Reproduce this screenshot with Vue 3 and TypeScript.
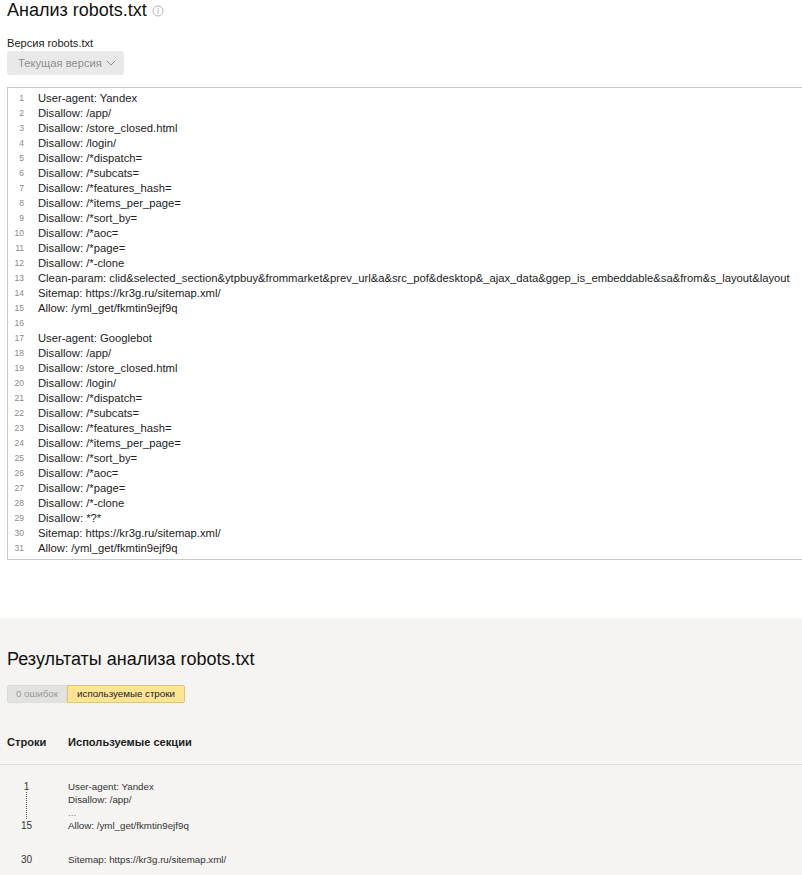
<script setup lang="ts">
const yandex: string[] = [
  'User-agent: Yandex', 'Disallow: /app/', 'Disallow: /store_closed.html', 'Disallow: /login/',
  'Disallow: /*dispatch=', 'Disallow: /*subcats=', 'Disallow: /*features_hash=', 'Disallow: /*items_per_page=',
  'Disallow: /*sort_by=', 'Disallow: /*aoc=', 'Disallow: /*page=', 'Disallow: /*-clone',
  'Clean-param: clid&selected_section&ytpbuy&frommarket&prev_url&a&src_pof&desktop&_ajax_data&ggep_is_embeddable&sa&from&s_layout&layout',
  'Sitemap: https://kr3g.ru/sitemap.xml/', 'Allow: /yml_get/fkmtin9ejf9q', '',
  'User-agent: Googlebot', 'Disallow: /app/', 'Disallow: /store_closed.html', 'Disallow: /login/',
  'Disallow: /*dispatch=', 'Disallow: /*subcats=', 'Disallow: /*features_hash=', 'Disallow: /*items_per_page=',
  'Disallow: /*sort_by=', 'Disallow: /*aoc=', 'Disallow: /*page=', 'Disallow: /*-clone', 'Disallow: *?*',
  'Sitemap: https://kr3g.ru/sitemap.xml/', 'Allow: /yml_get/fkmtin9ejf9q',
]
</script>

<template>
  <div class="page">
    <section class="top">
      <h1 class="title">
        <span>Анализ robots.txt</span>
        <svg class="info" width="12" height="12" viewBox="0 0 12 12" fill="none">
          <circle cx="6" cy="6" r="5" stroke="#b5b5b5" />
          <path d="M6 5.2V9M6 3v1.2" stroke="#b5b5b5" />
        </svg>
      </h1>
      <div class="label">Версия robots.txt</div>
      <div class="select">
        Текущая версия
        <svg width="10" height="6" viewBox="0 0 10 6" fill="none">
          <path d="M.7.7 5 5l4.3-4.3" stroke="#8c8c8c" />
        </svg>
      </div>
      <div class="editor">
        <div v-for="(line, i) in yandex" :key="i" class="line">
          <span class="num">{{ i + 1 }}</span>
          <span class="code">{{ line }}</span>
        </div>
      </div>
    </section>
    <section class="results">
      <h2 class="subtitle">Результаты анализа robots.txt</h2>
      <div class="tabs">
        <span class="tab off">0 ошибок</span>
        <span class="tab on">используемые строки</span>
      </div>
      <div class="head">
        <span class="c1">Строки</span>
        <span>Используемые секции</span>
      </div>
      <div class="rows">
        <div class="row">
          <div class="c1 nums">
            <span>1</span>
            <i class="dots"></i>
            <span>15</span>
          </div>
          <div class="text">
            <div>User-agent: Yandex</div>
            <div>Disallow: /app/</div>
            <div class="more">...</div>
            <div>Allow: /yml_get/fkmtin9ejf9q</div>
          </div>
        </div>
        <div class="row second">
          <div class="c1 nums"><span>30</span></div>
          <div class="text"><div>Sitemap: https://kr3g.ru/sitemap.xml/</div></div>
        </div>
      </div>
    </section>
  </div>
</template>

<style>
html, body { margin: 0; background: #fff; }
</style>

<style scoped>
.page {
  width: 802px;
  height: 875px;
  overflow: hidden;
  font-family: "Liberation Sans", Arial, sans-serif;
  color: #1a1a1a;
}
.top { height: 618px; padding: 0 0 0 7px; box-sizing: border-box; }
.title {
  display: flex;
  align-items: center;
  gap: 5px;
  margin: 0;
  height: 37px;
  padding-bottom: 16px;
  box-sizing: border-box;
  font-size: 18px;
  line-height: 21px;
  font-weight: 400;
  color: #111;
}
.label { font-size: 11.1px; line-height: 13px; color: #222; }
.select {
  display: flex;
  align-items: center;
  gap: 4px;
  width: 117px;
  height: 24px;
  margin-top: 1px;
  padding-left: 11px;
  box-sizing: border-box;
  background: #e9e9e9;
  border-radius: 3px;
  font-size: 11.2px;
  color: #8f8f8f;
}
.editor {
  width: 820px;
  height: 473px;
  margin-top: 12px;
  padding-top: 3px;
  box-sizing: border-box;
  border: 1px solid #c9c9c9;
}
.line { display: flex; height: 15px; line-height: 15px; }
.num { width: 16px; flex: none; text-align: right; font-size: 8.5px; color: #888; }
.code { margin-left: 14px; font-size: 11.25px; color: #222; white-space: pre; }
.results {
  height: 257px;
  box-sizing: border-box;
  background: #f5f4f2;
  padding-top: 31px;
}
.subtitle {
  margin: 0 0 0 7px;
  font-size: 18px;
  line-height: 21px;
  font-weight: 400;
  color: #111;
}
.tabs { display: flex; margin: 15px 0 0 7px; height: 18px; }
.tab {
  box-sizing: border-box;
  height: 18px;
  line-height: 16px;
  font-size: 9.75px;
  text-align: center;
}
.off {
  width: 60px;
  background: #e2e2e1;
  border: 1px solid #dcdcdb;
  border-radius: 2px 0 0 2px;
  color: #999;
}
.on {
  width: 118px;
  background: #fee594;
  border: 1px solid #dcc67c;
  border-radius: 0 2px 2px 0;
  color: #222;
}
.head {
  display: flex;
  height: 38px;
  margin-top: 23px;
  padding-left: 7px;
  border-bottom: 1px solid #e2e2e0;
  font-size: 11.1px;
  font-weight: 700;
  line-height: 32px;
  color: #222;
}
.c1 { width: 61px; flex: none; }
.rows { padding: 15px 0 0 7px; }
.row { display: flex; }
.second { margin-top: 21px; }
.nums {
  display: flex;
  flex-direction: column;
  align-items: center;
  width: 39px;
  margin-right: 22px;
  font-size: 10px;
  line-height: 13px;
  color: #333;
}
.dots {
  display: block;
  height: 27px;
  border-left: 1px dotted #555;
  margin: -1px 0 0;
}
.text { font-size: 9.75px; line-height: 13px; color: #333; }
.more { height: 13px; line-height: 13px; color: #777; }
</style>
